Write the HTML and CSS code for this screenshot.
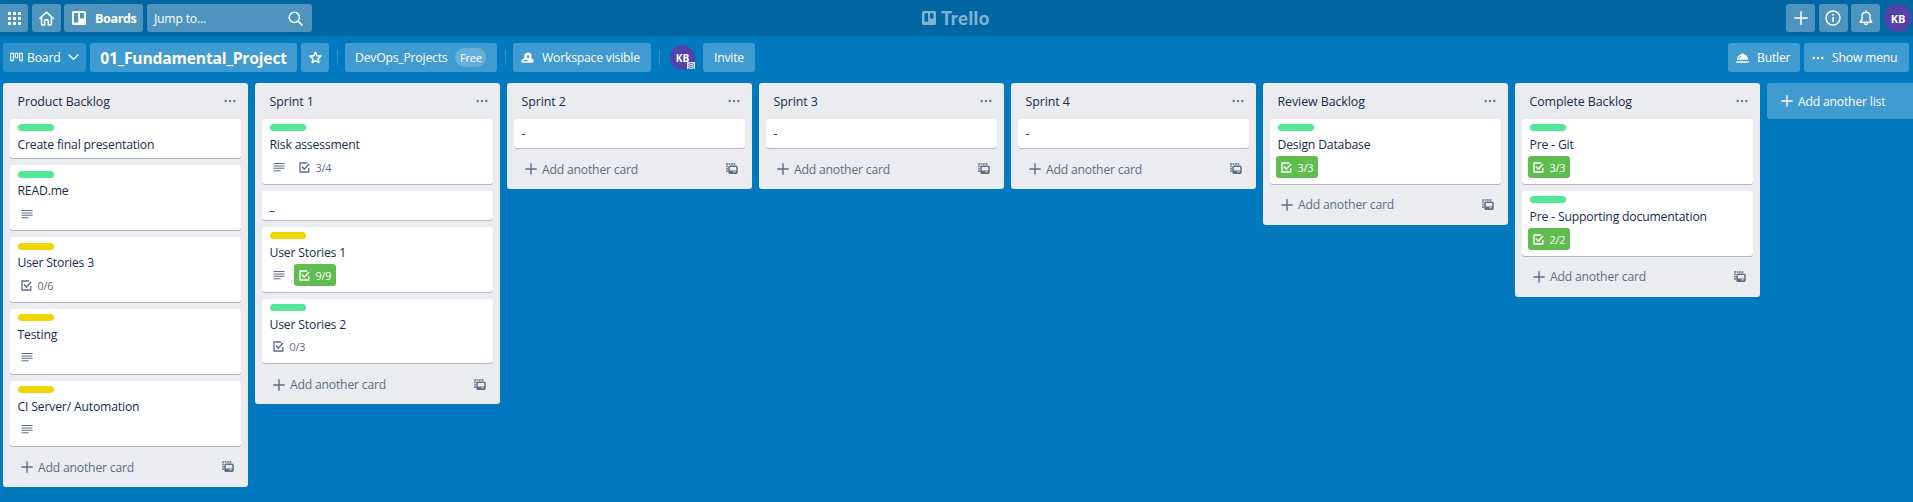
FILE: index.html
```html
<!DOCTYPE html>
<html lang="en">
<head>
<meta charset="utf-8">
<title>01_Fundamental_Project | Trello</title>
<link rel="stylesheet" href="styles.css">
</head>
<body>
<svg class="defs" width="0" height="0">
  <symbol id="desc" viewBox="0 0 12 10"><path d="M.5 1.5h11M.5 4h11M.5 6.3h11M.5 8.7h7" stroke="currentColor" stroke-width="1.1" fill="none"/></symbol>
  <symbol id="check" viewBox="0 0 11 11"><path d="M8.2 1H1v9h8.8V6" stroke="currentColor" stroke-width="1.3" fill="none"/><path d="M3 4.6l2.3 2.6L10 2" stroke="currentColor" stroke-width="1.5" fill="none"/></symbol>
  <symbol id="plus" viewBox="0 0 12 12"><path d="M6 .8v10.4M.8 6h10.4" stroke="currentColor" stroke-width="1.4" fill="none" stroke-linecap="round"/></symbol>
  <symbol id="dots" viewBox="0 0 12 4"><circle cx="1.7" cy="2" r="1.2"/><circle cx="6" cy="2" r="1.2"/><circle cx="10.3" cy="2" r="1.2"/></symbol>
  <symbol id="template" viewBox="0 0 12 12"><path d="M1 9V1h9" stroke="currentColor" stroke-width="1.5" stroke-dasharray="1.7 .7" fill="none"/><rect x="3" y="3.3" width="8" height="7" rx="1" stroke="currentColor" stroke-width="1.5" fill="none"/><path d="M3 7.5h8v3H3z"/><path d="M7.5 8.2h2v1.2h-2z" fill="#ebecf0"/></symbol>
</svg>

<header class="topbar">
  <div class="group">
    <a class="tbtn apps"><svg width="13" height="13" viewBox="0 0 13 13"><path d="M0 0h3v3H0zM5 0h3v3H5zM10 0h3v3h-3zM0 5h3v3H0zM5 5h3v3H5zM10 5h3v3h-3zM0 10h3v3H0zM5 10h3v3H5zM10 10h3v3h-3z"/></svg></a>
    <a class="tbtn home"><svg width="15" height="15" viewBox="0 0 15 15"><path d="M1 7.4L7.5 1 14 7.4M2.6 6.4V13q0 1 1 1h2.1v-3.8q0-1.6 1.8-1.6t1.8 1.6V14h2.1q1 0 1-1V6.4" fill="none" stroke="currentColor" stroke-width="1.5" stroke-linecap="round" stroke-linejoin="round"/></svg></a>
    <a class="tbtn boards"><svg width="14" height="14" viewBox="0 0 14 14"><path fill-rule="evenodd" d="M1.5 0h11Q14 0 14 1.5v11q0 1.5-1.5 1.5h-11Q0 14 0 12.5v-11Q0 0 1.5 0zM2 2v9.5h4.2V2zM8 2v5.5h4V2z"/></svg><span>Boards</span></a>
    <div class="search"><span>Jump to...</span><svg width="15" height="15" viewBox="0 0 15 15"><circle cx="6.3" cy="6.3" r="5.1" fill="none" stroke="currentColor" stroke-width="1.5"/><path d="M10.2 10.2l3.8 3.8" stroke="currentColor" stroke-width="1.7" stroke-linecap="round"/></svg></div>
  </div>
  <div class="logo"><svg width="14" height="14" viewBox="0 0 14 14"><path fill-rule="evenodd" d="M1.5 0h11Q14 0 14 1.5v11q0 1.5-1.5 1.5h-11Q0 14 0 12.5v-11Q0 0 1.5 0zM2.5 2.3v8.5H6V2.3zM8 2.3v5.2h3.5V2.3z"/></svg><span>Trello</span></div>
  <div class="group">
    <a class="tbtn sq"><svg width="14" height="14" viewBox="0 0 14 14"><path d="M7 .8v12.4M.8 7h12.4" stroke="currentColor" stroke-width="1.5" stroke-linecap="round"/></svg></a>
    <a class="tbtn sq"><svg width="16" height="16" viewBox="0 0 16 16"><circle cx="8" cy="8" r="7" fill="none" stroke="currentColor" stroke-width="1.4"/><path d="M8 7v5" stroke="currentColor" stroke-width="1.5"/><circle cx="8" cy="4.7" r=".95"/></svg></a>
    <a class="tbtn sq"><svg width="14" height="16" viewBox="0 0 14 16"><path d="M1.2 12.2L3 9.5V6q0-3.800 4-3.800T11 6v3.500l1.800 2.700zM7 2V1M5.500 13.300q0 1.300 1.500 1.300t1.500-1.300" fill="none" stroke="currentColor" stroke-width="1.4" stroke-linejoin="round" stroke-linecap="round"/></svg></a>
    <div class="avatar big">KB</div>
  </div>
</header>

<nav class="boardbar">
  <div class="group">
    <a class="bbtn view"><svg width="13" height="11" viewBox="0 0 13 11"><path d="M.7 1.2h2.6v7.500H.7zM5.300 1.200h2.500v4.600H5.300zM9.700 1.200h2.600v7.500H9.700z" fill="none" stroke="currentColor" stroke-width="1.1"/></svg><span>Board</span><svg width="11" height="7" viewBox="0 0 11 7"><path d="M1 1l4.5 4.3L10 1" fill="none" stroke="currentColor" stroke-width="1.3" stroke-linecap="round"/></svg></a>
    <a class="bbtn name"><span>01_Fundamental_Project</span></a>
    <a class="bbtn star"><svg width="13" height="13" viewBox="0 0 13 13"><path d="M6.5 1.2l1.6 3.5 3.8.4-2.8 2.6.8 3.8-3.4-1.9-3.4 1.9.8-3.8L1.1 5.1l3.8-.4z" fill="none" stroke="currentColor" stroke-width="1.5" stroke-linejoin="round"/></svg></a>
    <i class="divider"></i>
    <a class="bbtn team"><span>DevOps_Projects</span><b>Free</b></a>
    <i class="divider"></i>
    <a class="bbtn visible"><svg width="13" height="12" viewBox="0 0 13 12"><path fill-rule="evenodd" d="M3.2 5Q3 1 7 .5q3.500.2 3.600 3.500 0 1.300-.6 2 2.600 1.300 2.700 3.200 0 1.500-1 1.500H1.200Q0 10.600.2 9.300.6 7.300 3.400 6zM6 4.300q-.3 1.800 1 2 1.200-.2 1.200-1.700Q8 3 7 3 6.100 3.200 6 4.300zM4 7.700q-1.900.6-2.200 1.500h5.600Q6.400 7.800 4 7.700z"/></svg><span>Workspace visible</span></a>
    <i class="divider"></i>
    <div class="avatar small">KB<svg class="rank" width="8" height="7" viewBox="0 0 8 7"><path d="M0 0h8v7H0z" fill="#dfe1ee"/><path d="M1 2.500q3-2.500 6 0M1 4.500q3-2.500 6 0M1 6.500q3-2.500 6 0" fill="none" stroke="#5c6aa8" stroke-width=".9"/></svg></div>
    <a class="bbtn invite"><span>Invite</span></a>
  </div>
  <div class="group">
    <a class="bbtn butler"><svg width="13" height="12" viewBox="0 0 13 12"><path d="M1 7.800Q1.200 3 5.600 2.300V1.200h1.800v1.100Q11.800 3 12 7.800zM.2 9.200h12.600v1.500H.2z"/><path d="M3 6.500Q3.200 4.800 5 4.200" stroke="#409bd0" fill="none"/></svg><span>Butler</span></a>
    <a class="bbtn menu"><svg width="12" height="4"><use href="#dots"/></svg><span>Show menu</span></a>
  </div>
</nav>

<main class="board">
  <section class="list">
    <h2><span>Product Backlog</span><svg width="12" height="4"><use href="#dots"/></svg></h2>
    <article class="card"><i class="label green"></i><p>Create final presentation</p></article>
    <article class="card"><i class="label green"></i><p>READ.me</p><div class="badges"><em><svg width="12" height="10"><use href="#desc"/></svg></em></div></article>
    <article class="card"><i class="label yellow"></i><p>User Stories 3</p><div class="badges"><em><svg width="11" height="11"><use href="#check"/></svg>0/6</em></div></article>
    <article class="card"><i class="label yellow"></i><p>Testing</p><div class="badges"><em><svg width="12" height="10"><use href="#desc"/></svg></em></div></article>
    <article class="card"><i class="label yellow"></i><p>CI Server/ Automation</p><div class="badges"><em><svg width="12" height="10"><use href="#desc"/></svg></em></div></article>
    <footer><svg width="12" height="12"><use href="#plus"/></svg><span>Add another card</span><svg width="12" height="12"><use href="#template"/></svg></footer>
  </section>
  <section class="list">
    <h2><span>Sprint 1</span><svg width="12" height="4"><use href="#dots"/></svg></h2>
    <article class="card"><i class="label green"></i><p>Risk assessment</p><div class="badges"><em class="gap"><svg width="12" height="10"><use href="#desc"/></svg></em><em><svg width="11" height="11"><use href="#check"/></svg>3/4</em></div></article>
    <article class="card"><p>_</p></article>
    <article class="card"><i class="label yellow"></i><p>User Stories 1</p><div class="badges"><em class="gap"><svg width="12" height="10"><use href="#desc"/></svg></em><em class="done"><svg width="11" height="11"><use href="#check"/></svg>9/9</em></div></article>
    <article class="card"><i class="label green"></i><p>User Stories 2</p><div class="badges"><em><svg width="11" height="11"><use href="#check"/></svg>0/3</em></div></article>
    <footer><svg width="12" height="12"><use href="#plus"/></svg><span>Add another card</span><svg width="12" height="12"><use href="#template"/></svg></footer>
  </section>
  <section class="list">
    <h2><span>Sprint 2</span><svg width="12" height="4"><use href="#dots"/></svg></h2>
    <article class="card"><p>-</p></article>
    <footer><svg width="12" height="12"><use href="#plus"/></svg><span>Add another card</span><svg width="12" height="12"><use href="#template"/></svg></footer>
  </section>
  <section class="list">
    <h2><span>Sprint 3</span><svg width="12" height="4"><use href="#dots"/></svg></h2>
    <article class="card"><p>-</p></article>
    <footer><svg width="12" height="12"><use href="#plus"/></svg><span>Add another card</span><svg width="12" height="12"><use href="#template"/></svg></footer>
  </section>
  <section class="list">
    <h2><span>Sprint 4</span><svg width="12" height="4"><use href="#dots"/></svg></h2>
    <article class="card"><p>-</p></article>
    <footer><svg width="12" height="12"><use href="#plus"/></svg><span>Add another card</span><svg width="12" height="12"><use href="#template"/></svg></footer>
  </section>
  <section class="list">
    <h2><span>Review Backlog</span><svg width="12" height="4"><use href="#dots"/></svg></h2>
    <article class="card"><i class="label green"></i><p>Design Database</p><div class="badges"><em class="done"><svg width="11" height="11"><use href="#check"/></svg>3/3</em></div></article>
    <footer><svg width="12" height="12"><use href="#plus"/></svg><span>Add another card</span><svg width="12" height="12"><use href="#template"/></svg></footer>
  </section>
  <section class="list">
    <h2><span>Complete Backlog</span><svg width="12" height="4"><use href="#dots"/></svg></h2>
    <article class="card"><i class="label green"></i><p>Pre - Git</p><div class="badges"><em class="done"><svg width="11" height="11"><use href="#check"/></svg>3/3</em></div></article>
    <article class="card"><i class="label green"></i><p>Pre - Supporting documentation</p><div class="badges"><em class="done"><svg width="11" height="11"><use href="#check"/></svg>2/2</em></div></article>
    <footer><svg width="12" height="12"><use href="#plus"/></svg><span>Add another card</span><svg width="12" height="12"><use href="#template"/></svg></footer>
  </section>
  <a class="addlist"><svg width="12" height="12"><use href="#plus"/></svg><span>Add another list</span></a>
</main>
</body>
</html>
```

FILE: styles.css
```css
* { box-sizing: border-box; }
html, body { height: 100%; }
body {
  margin: 0;
  overflow: hidden;
  background: #0079bf;
  color: #172b4d;
  font-family: "Open Sans", "Noto Sans", sans-serif;
  font-size: 12.2px;
  letter-spacing: -0.2px;
}
.defs { display: none; }
svg { fill: currentColor; flex: none; display: block; }
span, b { white-space: nowrap; }
.group { display: flex; align-items: center; }

.topbar {
  position: relative;
  display: flex;
  justify-content: space-between;
  height: 36px;
  background: #0067a3;
  color: #fff;
}
.tbtn, .search {
  display: flex;
  align-items: center;
  height: 28px;
  border-radius: 3px;
  background: #4d95bf;
}
.apps { width: 28px; padding-left: 8px; border-radius: 0 3px 3px 0; margin-right: 4px; }
.home { width: 29px; justify-content: center; margin-right: 3px; }
.boards { width: 79px; padding-left: 8px; gap: 9px; margin-right: 4px; font-weight: 700; font-size: 12.6px; letter-spacing: -0.4px; }
.search { width: 165px; justify-content: space-between; padding: 0 9px 0 7px; }
.logo {
  position: absolute;
  left: 922px;
  top: 0;
  height: 36px;
  display: flex;
  align-items: center;
  gap: 5px;
  color: #80b3d1;
  font: 900 18.4px Lato, sans-serif;
  letter-spacing: 0.5px;
}
.sq { width: 29px; justify-content: center; margin-right: 3.6px; }
.avatar {
  display: flex;
  align-items: center;
  justify-content: center;
  border-radius: 50%;
  background: #5243aa;
  color: #fff;
  font-weight: 700;
  letter-spacing: 0;
}
.big { width: 28px; height: 28px; font-size: 11px; margin-right: 1px; }
.small { position: relative; width: 25px; height: 25px; font-size: 10px; margin: 0 8px 0 3px; }
.rank { position: absolute; right: 0; bottom: 1px; }

.boardbar {
  display: flex;
  justify-content: space-between;
  height: 47px;
  padding: 7px 4px 11px 3px;
  color: #fff;
}
.bbtn {
  display: flex;
  align-items: center;
  height: 29px;
  border-radius: 3px;
  background: #409bd0;
  margin-right: 4px;
}
.view { width: 83px; background: #2f92cb; padding-left: 7px; }
.view span { width: 41px; margin-left: 4px; }
.name { width: 207px; justify-content: center; font-size: 15.7px; font-weight: 700; letter-spacing: -0.2px; }
.star { width: 28px; justify-content: center; margin-right: 0; }
.divider { width: 1px; height: 15px; margin: 0 7.5px; background: #3394cc; }
.team { width: 152px; padding-left: 10px; gap: 8px; margin-right: 0; }
.team b { height: 19px; width: 31px; line-height: 19px; border-radius: 10px; text-align: center; background: #66afda; font-size: 11px; font-weight: 400; }
.visible { width: 138px; padding-left: 8px; gap: 8px; margin-right: 0; }
.invite { width: 52px; justify-content: center; margin-right: 0; }
.butler { width: 72px; padding-left: 8px; gap: 8px; }
.menu { width: 105px; padding-left: 8px; gap: 8px; margin-right: 0; }

.board { display: flex; align-items: flex-start; gap: 7px; padding-left: 3px; }
.list {
  flex: none;
  width: 245px;
  padding: 0 7px;
  border-radius: 3px;
  background: #ebecf0;
}
h2 {
  display: flex;
  justify-content: space-between;
  align-items: center;
  height: 36px;
  margin: 0;
  padding: 0 5px 0 7.5px;
  font-size: 12.4px;
  font-weight: 500;
  letter-spacing: -0.07px;
}
h2 svg { color: #6b778c; }
.card {
  min-height: 28.8px;
  margin-bottom: 7.2px;
  padding: 5.2px 8px 1.8px 7.5px;
  border-radius: 3px;
  background: #fff;
  box-shadow: 0 1px 0 rgba(9, 30, 66, .25);
}
.label { display: block; width: 36px; height: 7px; margin-bottom: 3.8px; border-radius: 4px; }
.green { background: #51e898; }
.yellow { background: #f2d600; }
p { height: 18px; line-height: 19px; margin: 0 0 3.5px; white-space: nowrap; letter-spacing: -0.17px; }
.badges { display: flex; height: 25.4px; padding-bottom: 4px; margin-left: -2px; color: #5e6c84; }
em { display: flex; align-items: center; gap: 6px; height: 21.4px; padding: 0 5px; border-radius: 3px; font-style: normal; font-size: 10.8px; }
.gap { margin-right: 4px; }
.done { background: #61bd4f; color: #fff; font-weight: 500; }
footer { display: flex; align-items: center; height: 36px; padding: 0 7px 3.4px 10.5px; margin-top: -2.2px; color: #5e6c84; }
footer span { flex: 1; margin-left: 5.5px; }
.addlist {
  flex: 1;
  min-width: 0;
  display: flex;
  align-items: center;
  gap: 5px;
  height: 36px;
  padding-left: 14px;
  border-radius: 3px 0 0 3px;
  background: #409bd0;
  color: #fff;
}
```
